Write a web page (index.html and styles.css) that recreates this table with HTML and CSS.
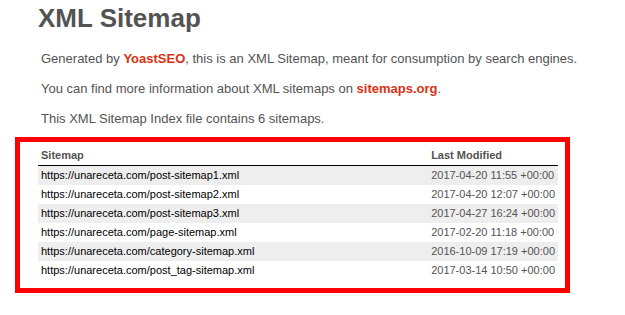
FILE: index.html
```html
<!DOCTYPE html>
<html>
<head>
<meta charset="utf-8">
<link rel="stylesheet" href="styles.css">
<title>XML Sitemap</title>
</head>
<body>
<div class="content">
  <h1 class="title">XML Sitemap</h1>
  <p class="expl">Generated by <a href="#">YoastSEO</a>, this is an XML Sitemap, meant for consumption by search engines.</p>
  <p class="expl">You can find more information about XML sitemaps on <a href="#">sitemaps.org</a>.</p>
  <p class="expl">This XML Sitemap Index file contains 6 sitemaps.</p>
</div>
<div class="frame">
  <table class="sitemap">
    <thead>
      <tr><th class="col-url">Sitemap</th><th class="col-date">Last Modified</th></tr>
    </thead>
    <tbody>
      <tr><td><a href="#">https://unareceta.com/post-sitemap1.xml</a></td><td>2017-04-20 11:55 +00:00</td></tr>
      <tr><td><a href="#">https://unareceta.com/post-sitemap2.xml</a></td><td>2017-04-20 12:07 +00:00</td></tr>
      <tr><td><a href="#">https://unareceta.com/post-sitemap3.xml</a></td><td>2017-04-27 16:24 +00:00</td></tr>
      <tr><td><a href="#">https://unareceta.com/page-sitemap.xml</a></td><td>2017-02-20 11:18 +00:00</td></tr>
      <tr><td><a href="#">https://unareceta.com/category-sitemap.xml</a></td><td>2016-10-09 17:19 +00:00</td></tr>
      <tr><td><a href="#">https://unareceta.com/post_tag-sitemap.xml</a></td><td>2017-03-14 10:50 +00:00</td></tr>
    </tbody>
  </table>
</div>
</body>
</html>
```
FILE: styles.css
```css
html, body {
  margin: 0;
  padding: 0;
  background: #fff;
}
body {
  font-family: Helvetica, "Liberation Sans", Arial, sans-serif;
  font-size: 13px;
  color: #545353;
}
.content {
  padding-left: 38px;
  padding-top: 3px;
}
.title {
  margin: 0;
  font-size: 26px;
  line-height: 30px;
  font-weight: bold;
  color: #545353;
}
.expl {
  margin: 0 3px;
  line-height: 15px;
  padding-top: 15px;
}
.expl:first-of-type {
  padding-top: 18px;
}
.expl a {
  color: #da3114;
  font-weight: bold;
  text-decoration: none;
}
.frame {
  margin: 11px 0 0 15px;
  width: 520px;
  height: 142px;
  border: 5px solid #ff0000;
  padding: 4px 7px 0 18px;
}
.sitemap {
  width: 520px;
  border-collapse: collapse;
  border: none;
}
.sitemap th, .sitemap td {
  padding: 3px;
  font-size: 11px;
  line-height: 13px;
  text-align: left;
  white-space: nowrap;
}
.sitemap th {
  border-bottom: 1px solid #000;
  font-weight: bold;
}
.col-date {
  width: 123px;
}
.sitemap tbody tr:nth-child(odd) td {
  background-color: #eee;
}
.sitemap a {
  color: #000;
  text-decoration: none;
}
```
